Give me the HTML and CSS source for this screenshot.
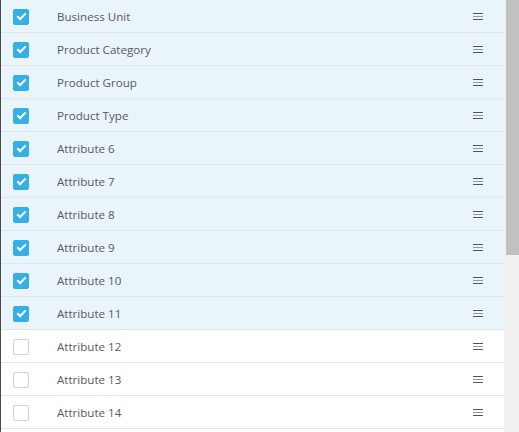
FILE: index.html
```html
<!DOCTYPE html>
<html lang="en">
<head>
  <meta charset="UTF-8" />
  <title>Columns</title>
  <link rel="stylesheet" href="styles.css">
</head>
<body>
  <div class="panel">
    <ul class="column-list">
      <li class="row checked"><span class="check"></span><span class="label">Business Unit</span><span class="handle"></span></li>
      <li class="row checked"><span class="check"></span><span class="label">Product Category</span><span class="handle"></span></li>
      <li class="row checked"><span class="check"></span><span class="label">Product Group</span><span class="handle"></span></li>
      <li class="row checked"><span class="check"></span><span class="label">Product Type</span><span class="handle"></span></li>
      <li class="row checked"><span class="check"></span><span class="label">Attribute 6</span><span class="handle"></span></li>
      <li class="row checked"><span class="check"></span><span class="label">Attribute 7</span><span class="handle"></span></li>
      <li class="row checked"><span class="check"></span><span class="label">Attribute 8</span><span class="handle"></span></li>
      <li class="row checked"><span class="check"></span><span class="label">Attribute 9</span><span class="handle"></span></li>
      <li class="row checked"><span class="check"></span><span class="label">Attribute 10</span><span class="handle"></span></li>
      <li class="row checked"><span class="check"></span><span class="label">Attribute 11</span><span class="handle"></span></li>
      <li class="row"><span class="check"></span><span class="label">Attribute 12</span><span class="handle"></span></li>
      <li class="row"><span class="check"></span><span class="label">Attribute 13</span><span class="handle"></span></li>
      <li class="row"><span class="check"></span><span class="label">Attribute 14</span><span class="handle"></span></li>
    </ul>
    <div class="scrollbar"><div class="thumb"></div></div>
  </div>
</body>
</html>
```

FILE: styles.css
```css
html, body {
  margin: 0;
  padding: 0;
  height: 432px;
  overflow: hidden;
  background: #fff;
}

.panel {
  display: flex;
  height: 432px;
  font-family: 'Open Sans', 'Noto Sans', sans-serif;
}

.column-list {
  list-style: none;
  margin: 0;
  padding: 0;
  width: 503px;
  border-left: 1px solid #4a4a4a;
  overflow: hidden;
}

.row {
  display: flex;
  align-items: center;
  height: 32px;
  border-bottom: 1px solid #e3e6e8;
  background: #fff;
}

.row.checked {
  background: #e9f4fb;
}

.check {
  box-sizing: border-box;
  width: 16px;
  height: 16px;
  margin: 1px 0 0 12px;
  border: 1px solid #d2d2d2;
  border-radius: 2px;
  background: #fff;
  display: flex;
  align-items: center;
  justify-content: center;
}

.checked .check {
  background: #36afe7;
  border-color: #36afe7;
}

.checked .check::after {
  content: '';
  width: 7px;
  height: 3px;
  border-left: 2px solid #fff;
  border-bottom: 2px solid #fff;
  transform: rotate(-45deg);
  margin-top: -2px;
}

.label {
  flex: 1;
  margin-left: 28px;
  font-size: 11.6px;
  color: #5a5a5a;
}

.handle {
  width: 10px;
  height: 5px;
  margin-right: 21px;
  border-top: 1px solid #555;
  border-bottom: 1px solid #555;
  position: relative;
}

.handle::after {
  content: '';
  position: absolute;
  left: 0;
  right: 0;
  top: 2px;
  height: 1px;
  background: #999;
}

.scrollbar {
  width: 15px;
  background: #f1f1f1;
}

.thumb {
  margin-left: 2px;
  width: 13px;
  height: 255px;
  background: #c1c1c1;
}
```
